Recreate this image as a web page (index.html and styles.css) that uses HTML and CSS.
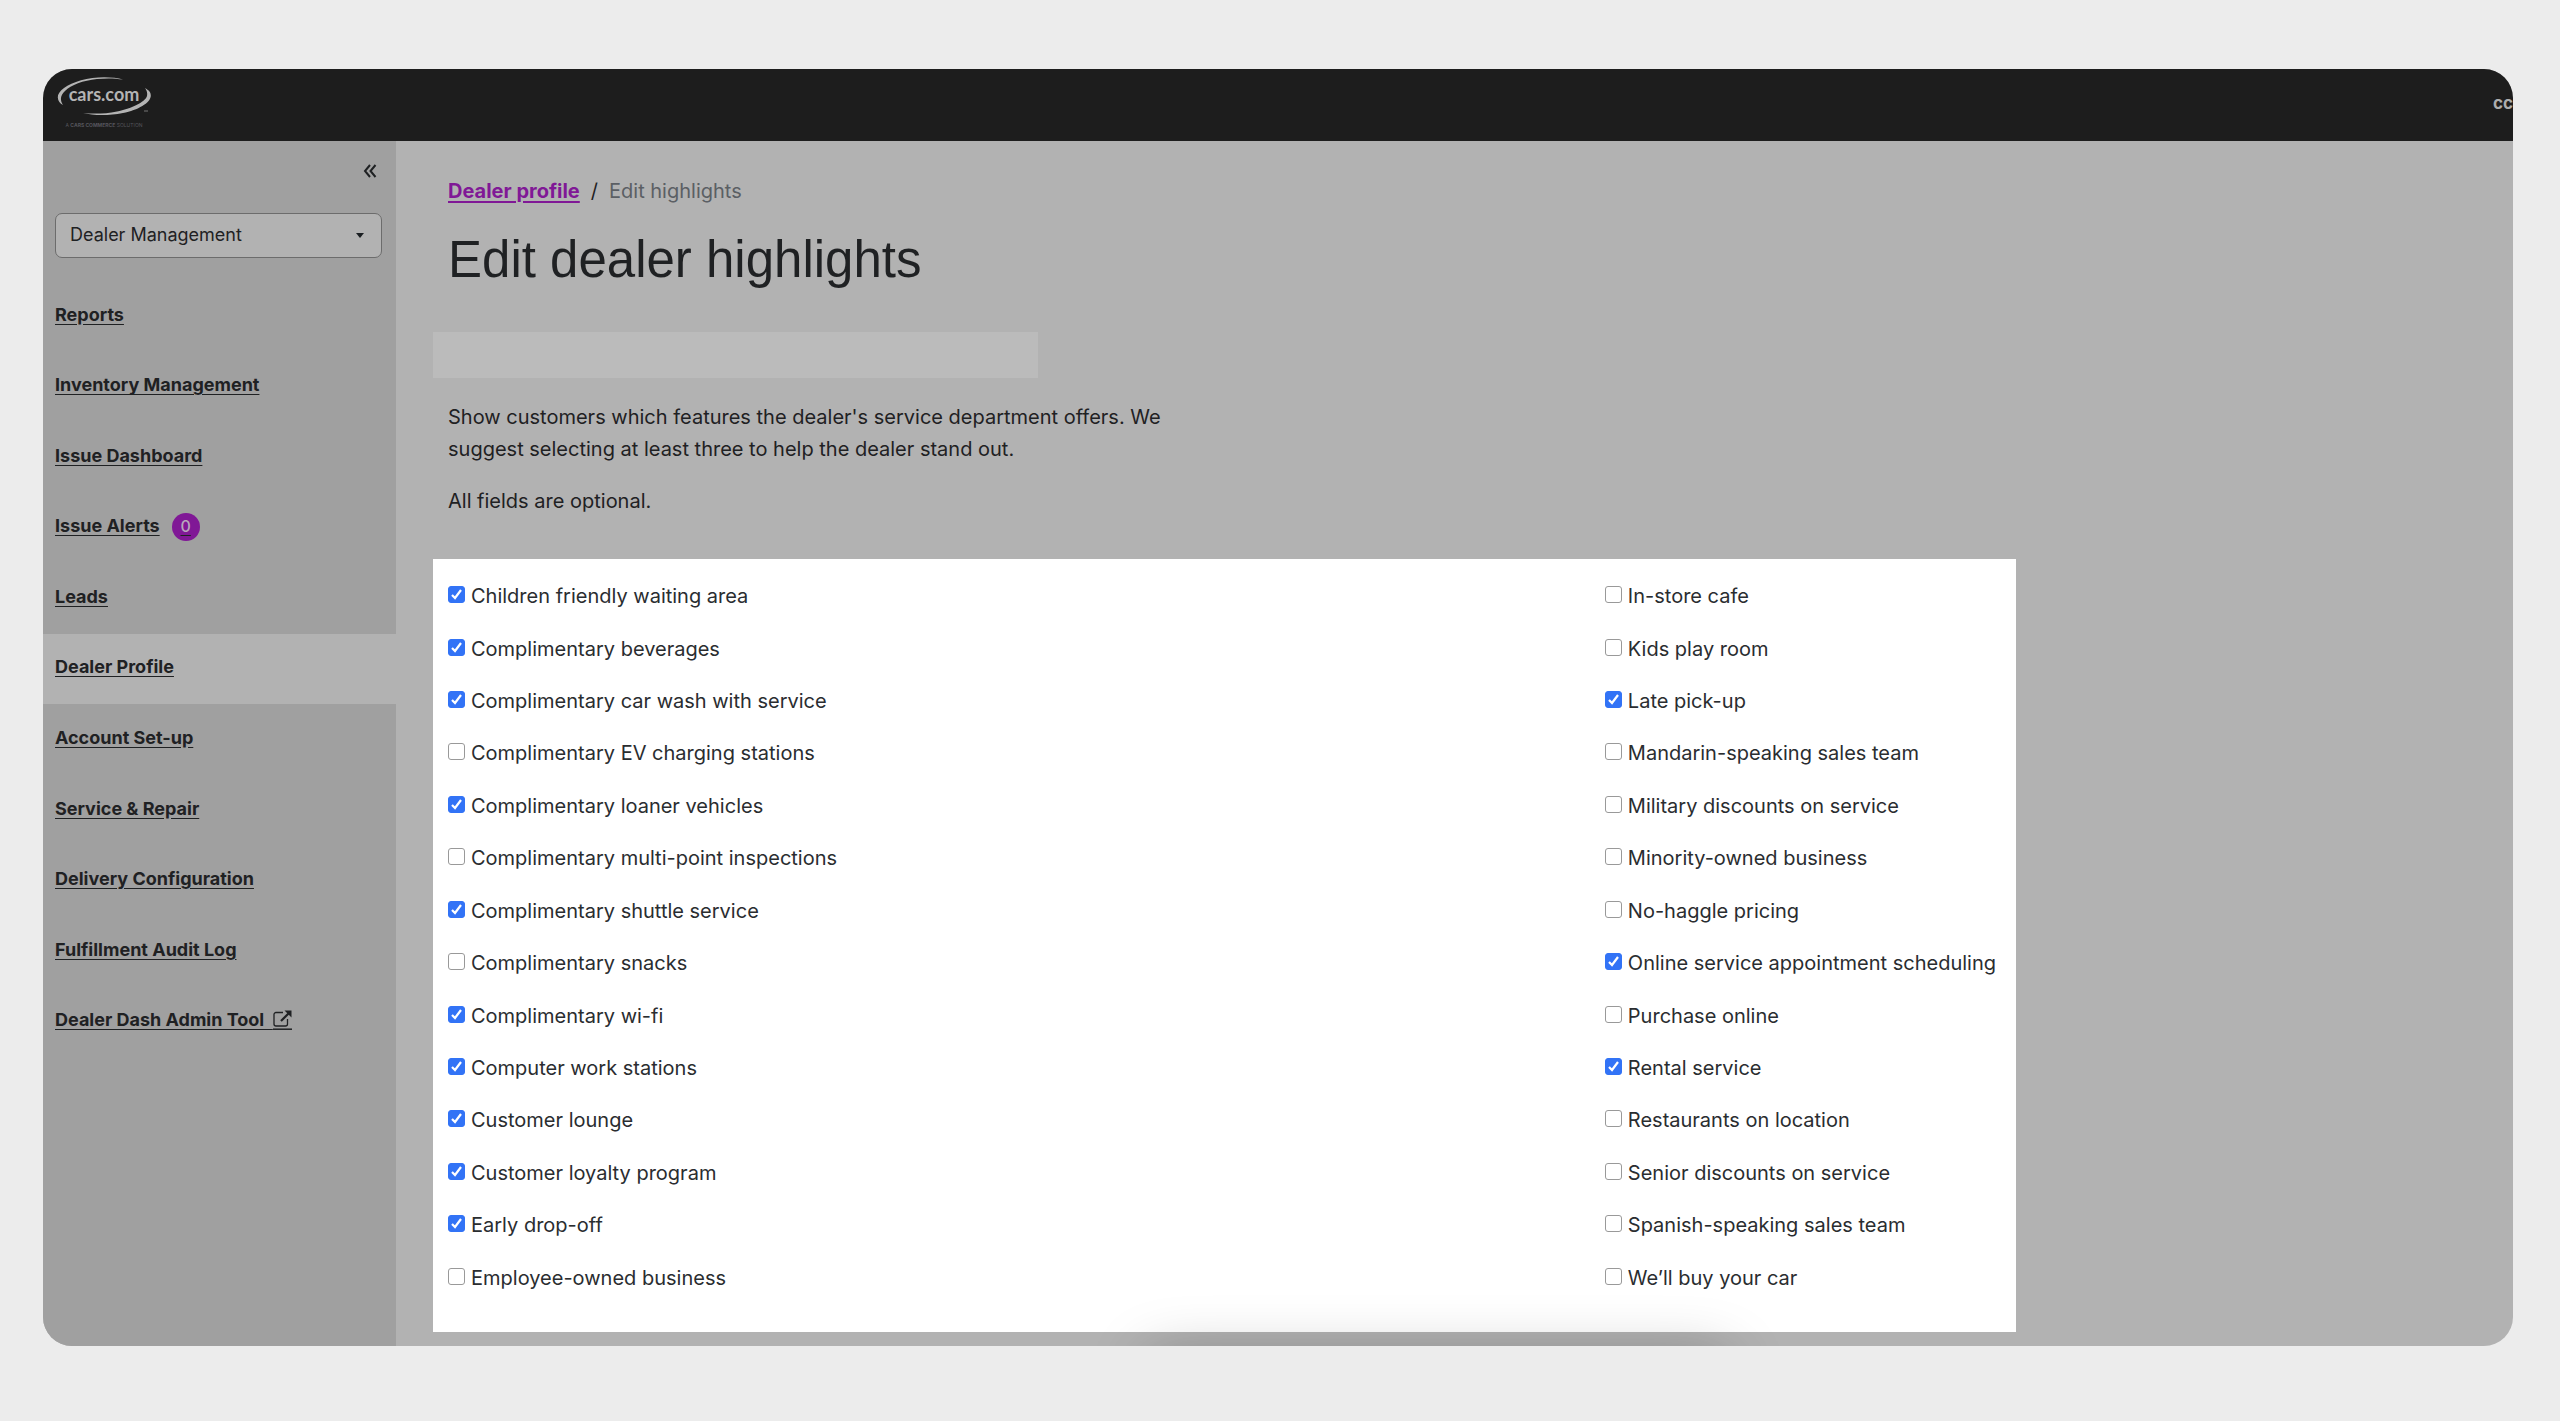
FILE: index.html
```html
<!DOCTYPE html>
<html lang="en">
<head>
<meta charset="utf-8">
<title>Edit dealer highlights</title>
<link rel="stylesheet" href="styles.css">
</head>
<body>
<div class="frame">
  <header class="topbar">
    <a class="logo" href="#" aria-label="cars.com">
      <svg width="96" height="54" viewBox="0 0 96 54">
        <path fill="#b4b4b4" d="M66 3.500C56 .5 38 .2 24 4.200C10 8.200 .5 15 .8 21.500C1 25 3 27.500 6 29C3 24 3 20 8 15C14 9 26 4.500 40 3C50 2 58 2.300 66 3.500Z"/>
        <path fill="#b4b4b4" d="M88 12C92.500 14.500 94 17 93.800 20C93.300 27 81 34 66 37C51 40 36 39.500 26 37C36 38 48 38 60 35.500C74 32.500 88 26.500 90 20C90.600 17.500 90 14.500 88 12Z"/>
        <text class="logo-name" x="47" y="25" text-anchor="middle">cars.com</text>
        <path stroke="#777" d="M87 35h4"/>
        <text class="logo-tag" x="47" y="51" text-anchor="middle">A <tspan class="logo-strong">CARS COMMERCE</tspan> SOLUTION</text>
      </svg>
    </a>
    <span class="account">cc</span>
  </header>
  <div class="body">
    <aside class="sidebar">
      <button class="collapse" type="button" aria-label="Collapse menu">
        <svg width="14" height="14" viewBox="0 0 14 14" fill="none" stroke="#1f2123" stroke-width="2"><path d="M7 1L2 7l5 6M12.500 1l-5 6 5 6"/></svg>
      </button>
      <div class="picker">
        <select class="picker-select" aria-label="Section"><option>Dealer Management</option></select>
        <svg class="picker-caret" width="8" height="5" viewBox="0 0 8 5"><path fill="#1a1e21" d="M0 0h8L4 5z"/></svg>
      </div>
      <nav>
        <ul class="nav">
          <li><a href="#">Reports</a></li>
          <li><a href="#">Inventory Management</a></li>
          <li><a href="#">Issue Dashboard</a></li>
          <li><a href="#">Issue Alerts<span class="badge"><span>0</span></span></a></li>
          <li><a href="#">Leads</a></li>
          <li class="active"><a href="#">Dealer Profile</a></li>
          <li><a href="#">Account Set-up</a></li>
          <li><a href="#">Service &amp; Repair</a></li>
          <li><a href="#">Delivery Configuration</a></li>
          <li><a href="#">Fulfillment Audit Log</a></li>
          <li><a href="#">Dealer Dash Admin Tool&nbsp; <svg class="external" width="19" height="20" viewBox="0 0 19 20" fill="none" stroke="#1f2123"><path stroke-width="1.300" d="M10 2.500H3a2 2 0 0 0-2 2V14a2 2 0 0 0 2 2h9.500a2 2 0 0 0 2-2V9"/><path stroke-width="2.200" d="M8 11l8-8"/><path fill="#1f2123" stroke="none" d="M11.500.5H18.500V7.500z"/><path stroke-width="1.500" d="M0 19.200h19"/></svg></a></li>
        </ul>
      </nav>
    </aside>
    <main class="main">
      <div class="intro">
        <nav class="crumbs" aria-label="Breadcrumb"><a href="#">Dealer profile</a><span>/</span><span class="here">Edit highlights</span></nav>
        <h1>Edit dealer highlights</h1>
      </div>
      <div class="dealer-name"></div>
      <div class="intro">
        <p>Show customers which features the dealer's service department offers. We suggest selecting at least three to help the dealer stand out.</p>
        <p>All fields are optional.</p>
      </div>
      <form class="panel">
        <ul class="options">
          <li><label><input type="checkbox" checked>Children friendly waiting area</label></li>
          <li><label><input type="checkbox" checked>Complimentary beverages</label></li>
          <li><label><input type="checkbox" checked>Complimentary car wash with service</label></li>
          <li><label><input type="checkbox">Complimentary EV charging stations</label></li>
          <li><label><input type="checkbox" checked>Complimentary loaner vehicles</label></li>
          <li><label><input type="checkbox">Complimentary multi-point inspections</label></li>
          <li><label><input type="checkbox" checked>Complimentary shuttle service</label></li>
          <li><label><input type="checkbox">Complimentary snacks</label></li>
          <li><label><input type="checkbox" checked>Complimentary wi-fi</label></li>
          <li><label><input type="checkbox" checked>Computer work stations</label></li>
          <li><label><input type="checkbox" checked>Customer lounge</label></li>
          <li><label><input type="checkbox" checked>Customer loyalty program</label></li>
          <li><label><input type="checkbox" checked>Early drop-off</label></li>
          <li><label><input type="checkbox">Employee-owned business</label></li>
        </ul>
        <ul class="options">
          <li><label><input type="checkbox">In-store cafe</label></li>
          <li><label><input type="checkbox">Kids play room</label></li>
          <li><label><input type="checkbox" checked>Late pick-up</label></li>
          <li><label><input type="checkbox">Mandarin-speaking sales team</label></li>
          <li><label><input type="checkbox">Military discounts on service</label></li>
          <li><label><input type="checkbox">Minority-owned business</label></li>
          <li><label><input type="checkbox">No-haggle pricing</label></li>
          <li><label><input type="checkbox" checked>Online service appointment scheduling</label></li>
          <li><label><input type="checkbox">Purchase online</label></li>
          <li><label><input type="checkbox" checked>Rental service</label></li>
          <li><label><input type="checkbox">Restaurants on location</label></li>
          <li><label><input type="checkbox">Senior discounts on service</label></li>
          <li><label><input type="checkbox">Spanish-speaking sales team</label></li>
          <li><label><input type="checkbox">We’ll buy your car</label></li>
        </ul>
      </form>
    </main>
  </div>
  <div class="dock-shadow"></div>
</div>
</body>
</html>
```

FILE: styles.css
```css
* { box-sizing: border-box; }
body {
  margin: 0;
  padding: 69px 47px 75px 43px;
  background: #ececec;
  color: #1f2123;
  font: 20px/32px Inter, "Liberation Sans", sans-serif;
}
ul { margin: 0; padding: 0; list-style: none; }

.frame {
  position: relative;
  overflow: hidden;
  border-radius: 29px;
  background: #b2b2b2;
}

/* Top bar */
.topbar {
  display: flex;
  justify-content: space-between;
  height: 72px;
  padding: 7px 0 0 14px;
  background: #1d1d1d;
}
.logo svg { display: block; }
.logo-name { fill: #b4b4b4; font: 700 18px Lato, sans-serif; }
.logo-tag { fill: #55555c; font: 5px Inter, sans-serif; }
.logo-strong { font-weight: 700; }
.account {
  padding-top: 11px;
  color: #adadad;
  font-size: 17px;
  font-weight: 700;
}

.body { display: flex; }

/* Sidebar */
.sidebar {
  flex: 0 0 353px;
  padding-bottom: 32px;
  background: #a0a0a0;
}
.collapse {
  display: block;
  margin: 19px 15px 0 auto;
  padding: 4px;
  border: 0;
  background: none;
  line-height: 0;
}
.picker {
  position: relative;
  margin: 31px 14px 0 12px;
}
.picker-select {
  display: block;
  width: 100%;
  height: 45px;
  padding: 0 14px 2px;
  appearance: none;
  border: 1px solid #6c6c6c;
  border-radius: 7px;
  background: #b2b2b2;
  color: #1f2123;
  font: 18px Inter, "Liberation Sans", sans-serif;
}
.picker-caret {
  position: absolute;
  top: 20px;
  right: 18px;
  pointer-events: none;
}
.nav {
  display: grid;
  grid-auto-rows: 1fr;
  height: 776px;
  margin-top: 23px;
}
.nav li {
  display: flex;
  align-items: center;
  padding: 0 0 3px 12px;
}
.nav .active { background: #b2b2b2; }
.nav a {
  color: #1f2123;
  font-size: 18px;
  font-weight: 700;
  text-underline-offset: 3px;
}
.external { vertical-align: -4px; }
.badge {
  display: inline-block;
  width: 28px;
  height: 28px;
  margin-left: 12px;
  border-radius: 50%;
  background: #801896;
  font-size: 16px;
  font-weight: 500;
  line-height: 26px;
  text-align: center;
}
.badge span {
  color: #b8a8bc;
  text-decoration: underline #1f2123;
}

/* Content */
.main { flex: 1; padding: 34px 0 14px 37px; }
.intro { width: 760px; padding-left: 15px; }
.crumbs { display: flex; gap: 11px; }
.crumbs a { color: #801896; font-weight: 700; text-underline-offset: 3px; }
.crumbs .here { color: #5b5f64; }
h1 {
  margin: 21px 0 0;
  font: 51px/64px "Liberation Sans", Arial, sans-serif;
}
.dealer-name {
  width: 605px;
  height: 46px;
  margin: 40px 0 23px;
  background: #bbb;
}
p { margin: 0 0 20px; }

.panel {
  display: flex;
  justify-content: space-between;
  max-width: 1583px;
  margin-top: 42px;
  padding: 11px 20px 28px 15px;
  background: #fff;
}
.options {
  display: grid;
  grid-auto-rows: 1fr;
  height: 734px;
}
.options li { display: flex; align-items: center; }
.options label { display: flex; align-items: center; gap: 6px; color: #2a2d30; }
.options input {
  width: 17px;
  height: 17px;
  margin: 0 0 3px;
  appearance: none;
  border: 1px solid #999;
  border-radius: 3px;
  background: #fff;
}
.options input:checked {
  border-color: #3273f6;
  background: #3273f6 url("data:image/svg+xml,%3Csvg xmlns='http://www.w3.org/2000/svg' viewBox='0 0 15 15'%3E%3Cpath d='M3 8l3 3 6-8' fill='none' stroke='white' stroke-width='2.200'/%3E%3C/svg%3E") center / 15px no-repeat;
}

/* Soft shade rising from the lower edge */
.dock-shadow {
  position: absolute;
  top: 100%;
  left: 1107px;
  width: 576px;
  height: 60px;
  margin-top: 12px;
  box-shadow: 0 0 60px rgba(0, 0, 0, .28);
}
```
